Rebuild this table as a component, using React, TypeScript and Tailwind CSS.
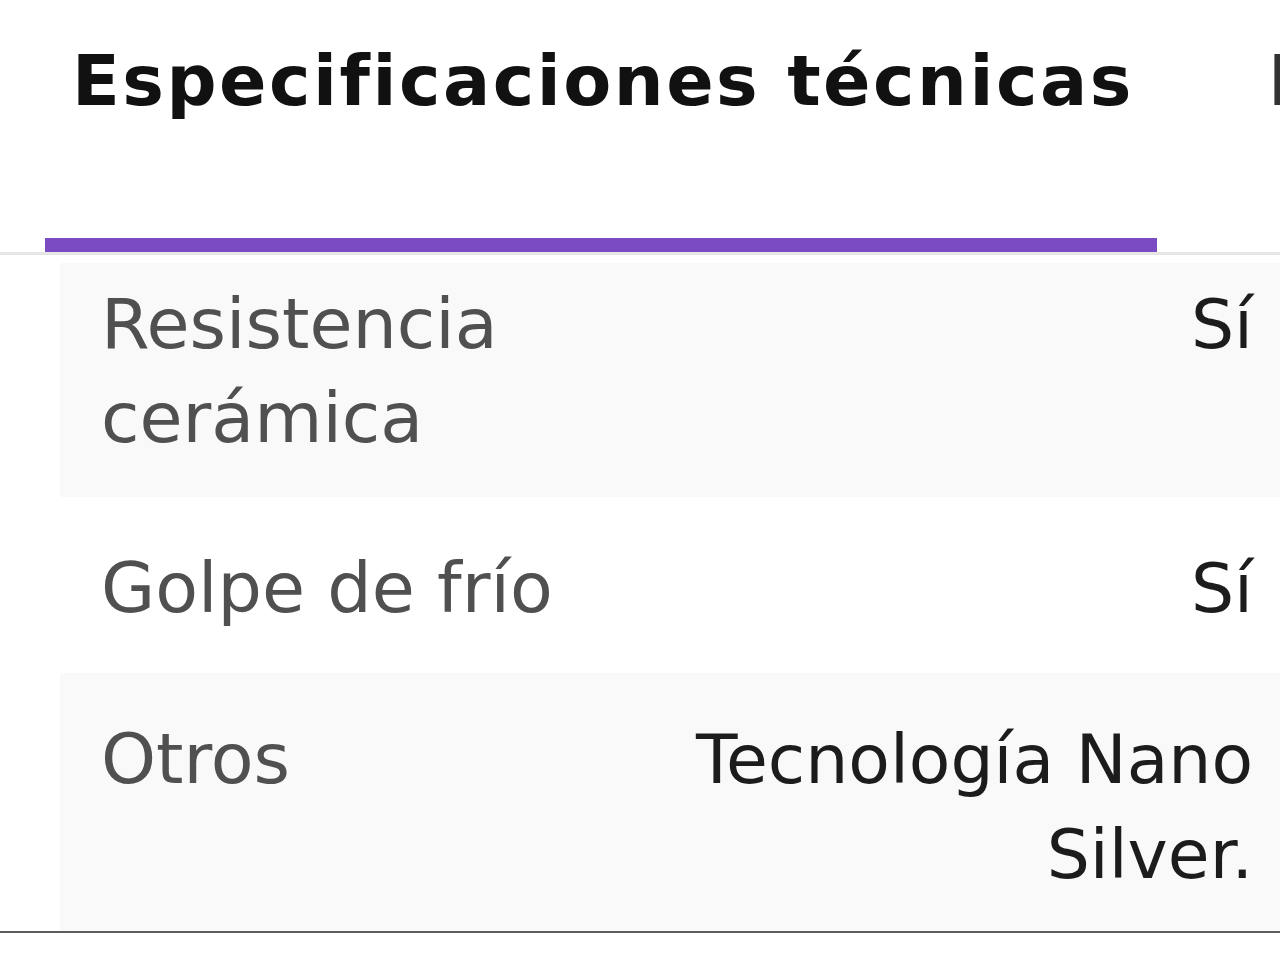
export default function App() {
    const rows = [
        { label: 'Resistencia cerámica', value: 'Sí', bg: 'bg-[#f9f9f9]', pad: 'pt-[14px] pb-[32px]' },
        { label: 'Golpe de frío', value: 'Sí', bg: 'bg-white', pad: 'pt-[44px] pb-[37px]' },
        { label: 'Otros', value: 'Tecnología Nano Silver.', bg: 'bg-[#f9f9f9]', pad: 'pt-[39px] pb-[29px]' },
    ]

    return (
        <div className="w-[1280px] h-[960px] overflow-hidden bg-white font-['DejaVu_Sans',sans-serif]">
            {/* Tabs */}
            <div className="flex items-end gap-[91px] border-b-[3px] border-[#e6e6e6] whitespace-nowrap">
                <div className="ml-[45px] w-[1112px] shrink-0">
                    <h2 className="px-[27px] pt-[46px] pb-[122px] text-[70px] leading-[70px] font-bold tracking-[2.5px] text-[#111]">
                        Especificaciones técnicas
                    </h2>
                    <div className="h-[14px] bg-[#7b4bc4]" />
                </div>
                <div className="shrink-0 pl-[20px] pt-[46px] pb-[136px] text-[70px] leading-[70px] font-bold text-[#333]">
                    Detalles
                </div>
            </div>

            {/* Spec rows */}
            <div className="mt-[8px] border-b-2 border-[#5c5c5c]">
                {rows.map(row => (
                    <div
                        key={row.label}
                        className={`ml-[60px] grid grid-cols-[540px_1fr] items-start pl-[41px] pr-[27px] ${row.bg} ${row.pad}`}
                    >
                        <span className="text-[70px] leading-[94px] text-[#505050]">{row.label}</span>
                        <span className="text-right text-[68px] leading-[95px] text-[#1c1c1c]">{row.value}</span>
                    </div>
                ))}
            </div>
        </div>
    )
}
